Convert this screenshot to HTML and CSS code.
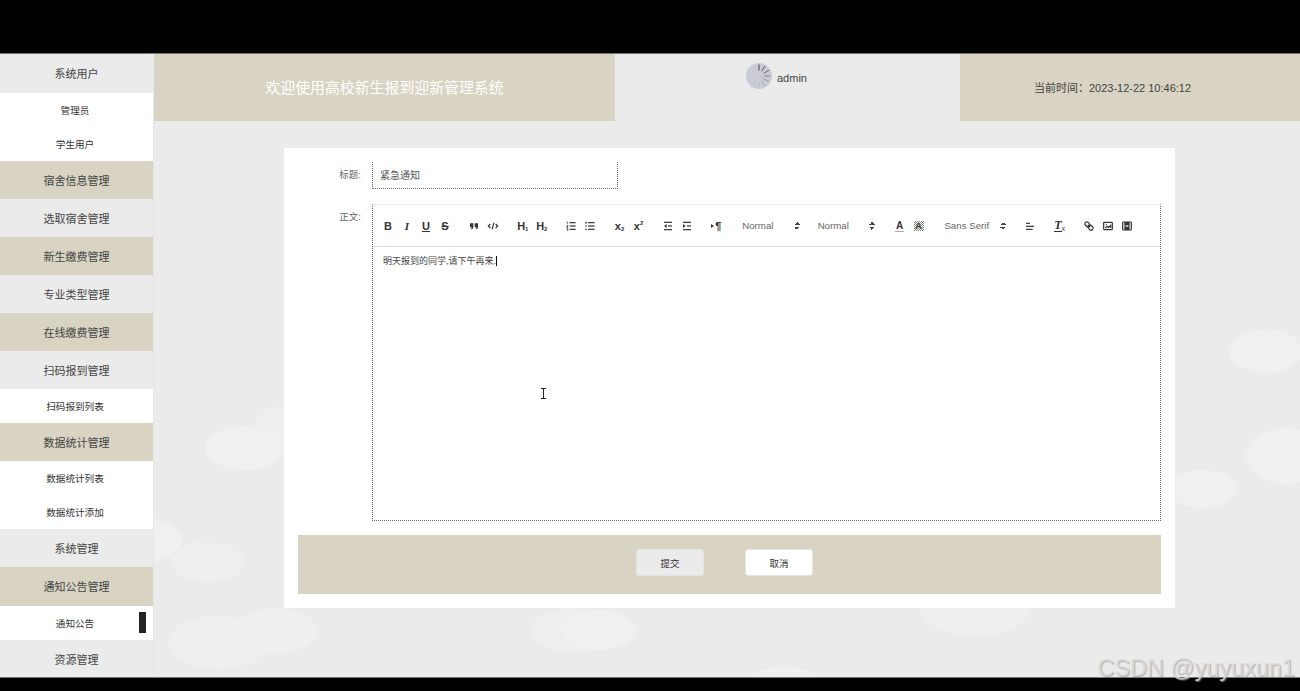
FILE: index.html
```html
<!DOCTYPE html>
<html lang="zh-CN">
<head>
  <meta charset="UTF-8">
  <title>高校新生报到迎新管理系统</title>
  <link rel="stylesheet" href="styles.css">
</head>
<body>
  <div class="bar-top"></div>
  <div class="app">
    <aside class="sidebar">
      <a class="nav grey first">系统用户</a>
      <a class="sub">管理员</a>
      <a class="sub">学生用户</a>
      <a class="nav tan">宿舍信息管理</a>
      <a class="nav grey">选取宿舍管理</a>
      <a class="nav tan">新生缴费管理</a>
      <a class="nav grey">专业类型管理</a>
      <a class="nav tan">在线缴费管理</a>
      <a class="nav grey">扫码报到管理</a>
      <a class="sub">扫码报到列表</a>
      <a class="nav tan">数据统计管理</a>
      <a class="sub">数据统计列表</a>
      <a class="sub">数据统计添加</a>
      <a class="nav grey">系统管理</a>
      <a class="nav tan tall">通知公告管理</a>
      <a class="sub current">通知公告</a>
      <a class="nav grey short">资源管理</a>
    </aside>

    <main class="main">
      <header class="header">
        <div class="header-title">欢迎使用高校新生报到迎新管理系统</div>
        <div class="header-user">
          <svg class="avatar" viewBox="0 0 26 26">
            <circle cx="13" cy="13" r="13" fill="#c9ccd4"/>
            <g stroke-width="1" stroke-linecap="round">
              <line x1="13" y1="2" x2="13" y2="7" stroke="#444"/>
              <line x1="18.5" y1="3.5" x2="16" y2="7.8" stroke="#555"/>
              <line x1="22.5" y1="7.5" x2="18.2" y2="10" stroke="#666"/>
              <line x1="24" y1="13" x2="19" y2="13" stroke="#808080"/>
              <line x1="22.5" y1="18.5" x2="18.2" y2="16" stroke="#969696"/>
              <line x1="18.5" y1="22.5" x2="16" y2="18.2" stroke="#aaa"/>
              <line x1="13" y1="24" x2="13" y2="19" stroke="#b6b8be"/>
              <line x1="7.5" y1="22.5" x2="10" y2="18.2" stroke="#bcbec4"/>
            </g>
          </svg>
          <span>admin</span>
        </div>
        <div class="header-time">当前时间：2023-12-22 10:46:12</div>
      </header>

      <div class="card">
        <div class="field">
          <label class="field-label">标题:</label>
          <div class="title-input">紧急通知</div>
        </div>
        <div class="field">
          <label class="field-label">正文:</label>
          <div class="editor">
            <div class="toolbar">
              <div class="group">
                <button class="tool letter"><b>B</b></button>
                <button class="tool letter serif"><b><i>I</i></b></button>
                <button class="tool letter"><b><u>U</u></b></button>
                <button class="tool letter"><b><s>S</s></b></button>
              </div>
              <div class="group">
                <button class="tool"><svg viewBox="0 0 18 18"><path class="fill" d="M3 5h5v5c0 2-1 3.500-3 4l-.5-1.300c.8-.3 1.300-.9 1.400-1.700H3zM10 5h5v5c0 2-1 3.500-3 4l-.5-1.300c.8-.3 1.300-.9 1.400-1.700H10z"/></svg></button>
                <button class="tool"><svg viewBox="0 0 18 18"><polyline class="line" points="5 6 2 9 5 12"/><polyline class="line" points="13 6 16 9 13 12"/><line class="line" x1="10.500" y1="4" x2="7.500" y2="14"/></svg></button>
              </div>
              <div class="group">
                <button class="tool letter"><span>H<sub>1</sub></span></button>
                <button class="tool letter"><span>H<sub>2</sub></span></button>
              </div>
              <div class="group">
                <button class="tool"><svg viewBox="0 0 18 18"><line class="line" x1="7" y1="4" x2="16" y2="4"/><line class="line" x1="7" y1="9" x2="16" y2="9"/><line class="line" x1="7" y1="14" x2="16" y2="14"/><path class="thin" d="M2.500 3h1.500v3M2.500 8h2v1.500h-2v1.500h2M2.500 12.500h2v3h-2M2.800 14h1.500"/></svg></button>
                <button class="tool"><svg viewBox="0 0 18 18"><line class="line" x1="6" y1="4" x2="16" y2="4"/><line class="line" x1="6" y1="9" x2="16" y2="9"/><line class="line" x1="6" y1="14" x2="16" y2="14"/><path class="round" d="M3 4h.01M3 9h.01M3 14h.01"/></svg></button>
              </div>
              <div class="group">
                <button class="tool letter"><span>x<sub>2</sub></span></button>
                <button class="tool letter"><span>x<sup>2</sup></span></button>
              </div>
              <div class="group">
                <button class="tool"><svg viewBox="0 0 18 18"><line class="line" x1="3" y1="3.500" x2="15" y2="3.500"/><line class="line" x1="3" y1="14.500" x2="15" y2="14.500"/><line class="line" x1="9" y1="9" x2="15" y2="9"/><polygon class="fill" points="7 6 7 12 3 9"/></svg></button>
                <button class="tool"><svg viewBox="0 0 18 18"><line class="line" x1="3" y1="3.500" x2="15" y2="3.500"/><line class="line" x1="3" y1="14.500" x2="15" y2="14.500"/><line class="line" x1="9" y1="9" x2="15" y2="9"/><polygon class="fill" points="3 6 3 12 7 9"/></svg></button>
              </div>
              <div class="group">
                <button class="tool para"><span class="arrow-right"></span>¶</button>
              </div>
              <div class="group">
                <div class="picker">Normal<span class="updown"></span></div>
              </div>
              <div class="group">
                <div class="picker long">Normal<span class="updown"></span></div>
              </div>
              <div class="group">
                <button class="tool letter color-a"><b>A</b></button>
                <button class="tool letter bg-a"><b>A</b></button>
              </div>
              <div class="group">
                <div class="picker wide">Sans Serif<span class="updown"></span></div>
              </div>
              <div class="group">
                <button class="tool"><svg viewBox="0 0 18 18"><line class="line" x1="3" y1="5" x2="9" y2="5"/><line class="line" x1="3" y1="9.500" x2="15" y2="9.500"/><line class="line" x1="3" y1="14" x2="13" y2="14"/></svg></button>
              </div>
              <div class="group">
                <button class="tool clear"><b><i>T</i></b><small>x</small></button>
              </div>
              <div class="group">
                <button class="tool"><svg viewBox="0 0 18 18"><rect class="line" x="2.500" y="3.500" width="8" height="6" rx="3" transform="rotate(45 6.500 6.500)"/><rect class="line" x="7.500" y="8.500" width="8" height="6" rx="3" transform="rotate(45 11.500 11.500)"/><line class="line" x1="7" y1="7" x2="11" y2="11"/></svg></button>
                <button class="tool"><svg viewBox="0 0 18 18"><rect class="line" x="2.500" y="3.500" width="13" height="11" rx="1"/><polyline class="line" points="5 12 8 9.500 10 11 13 8 13 12"/><circle class="fill" cx="6.500" cy="7" r="1"/></svg></button>
                <button class="tool"><svg viewBox="0 0 18 18"><rect class="line" x="2.500" y="3" width="13" height="12" rx="1"/><line class="line" x1="6" y1="3" x2="6" y2="15"/><line class="line" x1="12" y1="3" x2="12" y2="15"/><rect class="fill" x="6" y="3" width="6" height="5"/><rect class="fill" x="6" y="10" width="6" height="5"/></svg></button>
              </div>
            </div>
            <div class="editor-body"><span class="caret">明天报到的同学,请下午再来.</span></div>
          </div>
        </div>
        <div class="actions">
          <button class="btn btn-grey">提交</button>
          <button class="btn btn-white">取消</button>
        </div>
      </div>

      <svg class="ibeam" viewBox="0 0 7 11"><path d="M1 .5h5M3.500.5v10M1 10.500h5" fill="none" stroke="#222"/></svg>
    </main>
  </div>
  <div class="bar-bottom"></div>
  <div class="watermark">CSDN @yuyuxun1</div>
</body>
</html>
```

FILE: styles.css
```css
* {
  box-sizing: border-box;
}
html, body {
  height: 100%;
}
body {
  margin: 0;
  overflow: hidden;
  background-color: #000;
  color: #333;
  font-family: "Liberation Sans", "Noto Sans CJK SC", sans-serif;
  font-size: 10px;
}
.bar-top {
  height: 53px;
}
.bar-bottom {
  height: 13px;
}
.app {
  display: flex;
  height: 625px;
  border-top: 1px solid #777;
  border-bottom: 1px solid #777;
  overflow: hidden;
}

/* sidebar */
.sidebar {
  width: 153px;
  flex: none;
  display: flex;
  flex-direction: column;
  background-color: #fff;
  position: relative;
  z-index: 1;
}
.nav, .sub {
  display: flex;
  align-items: center;
  justify-content: center;
  flex: none;
}
.nav {
  height: 38px;
  font-size: 11px;
  color: #444;
}
.first, .tall {
  height: 39px;
  padding-bottom: 1px;
}
.short {
  height: 37px;
}
.sub {
  height: 34px;
  background-color: #fff;
  font-size: 9.600px;
  color: #333;
  padding-right: 3px;
}
.grey {
  background-color: #ebebeb;
}
.tan {
  background-color: #d8d3c2;
}
.current {
  position: relative;
}
.current::after {
  content: "";
  position: absolute;
  left: 139px;
  top: 6px;
  width: 7px;
  height: 21px;
  background-color: #222;
}

/* main area */
.main {
  flex: 1;
  position: relative;
  border-left: 1px solid #e6e6e6;
  background-color: #ebebeb;
  background-image:
    radial-gradient(40px 22px at 91px 394px, #f0f0f0 98%, transparent),
    radial-gradient(36px 26px at 136px 376px, #eeeeee 98%, transparent),
    radial-gradient(37px 22px at 1111px 297px, #f0f0f0 98%, transparent),
    radial-gradient(42px 28px at 1132px 402px, #f0f0f0 98%, transparent),
    radial-gradient(35px 19px at 1049px 435px, #f0f0f0 98%, transparent),
    radial-gradient(52px 25px at -24px 486px, #f0f0f0 98%, transparent),
    radial-gradient(37px 20px at 53px 508px, #eeeeee 98%, transparent),
    radial-gradient(43px 23px at 121px 577px, #efefef 98%, transparent),
    radial-gradient(50px 27px at 64px 589px, #eeeeee 98%, transparent),
    radial-gradient(38px 20px at 445px 576px, #f0f0f0 98%, transparent),
    radial-gradient(43px 21px at 418px 576px, #eeeeee 98%, transparent),
    radial-gradient(55px 27px at 821px 555px, #efefef 98%, transparent),
    radial-gradient(35px 14px at 630px 627px, #f0f0f0 98%, transparent);
}
.header {
  display: flex;
  height: 67px;
}
.header-title {
  width: 461px;
  padding-bottom: 2px;
  background-color: #d8d3c2;
  color: #fff;
  font-size: 14.900px;
  display: flex;
  align-items: center;
  justify-content: center;
}
.header-user {
  width: 345px;
  padding: 9px 0 0 131px;
  display: flex;
  align-items: flex-start;
  gap: 5px;
  font-size: 11px;
  color: #444;
  background-color: #ebebeb;
}
.header-user span {
  margin-top: 9px;
}
.avatar {
  width: 26px;
  height: 26px;
}
.header-time {
  flex: 1;
  background-color: #d8d3c2;
  color: #444;
  font-size: 11px;
  padding: 0 35px 2px 0;
  display: flex;
  align-items: center;
  justify-content: center;
}

/* form card */
.card {
  width: 891px;
  height: 460px;
  margin: 27px 0 0 130px;
  padding: 14px 14px 0;
  background-color: #fff;
}
.field {
  display: flex;
  gap: 11px;
  margin-bottom: 15px;
}
.field-label {
  width: 63px;
  flex: none;
  text-align: right;
  font-size: 9.500px;
  color: #666;
  padding-top: 5px;
}
.title-input {
  width: 246px;
  height: 27px;
  padding: 5px 7px 0;
  border: 1px dotted #666;
  border-top: none;
  font-size: 10px;
  color: #555;
}
.editor {
  width: 789px;
  height: 317px;
  border: 1px dotted #666;
  border-top: 1px solid #eee;
  display: flex;
  flex-direction: column;
}
.toolbar {
  height: 42px;
  padding: 0 0 0 5.500px;
  display: flex;
  align-items: center;
  gap: 10.400px;
  border-bottom: 1px solid #ddd;
}
.group {
  display: flex;
}
.tool {
  width: 19px;
  height: 16px;
  padding: 0;
  border: none;
  background: none;
  color: #333;
  display: flex;
  align-items: center;
  justify-content: center;
  font-family: inherit;
}
.tool svg {
  width: 12px;
  height: 12px;
}
.line {
  fill: none;
  stroke: #333;
  stroke-width: 1.800;
}
.thin {
  fill: none;
  stroke: #333;
  stroke-width: 1;
}
.round {
  fill: none;
  stroke: #333;
  stroke-width: 2.500;
  stroke-linecap: round;
}
.fill {
  fill: #333;
}
.letter {
  font-size: 11px;
  font-weight: bold;
}
.letter sub, .letter sup {
  font-size: 6px;
  line-height: 0;
}
.letter sub {
  vertical-align: -1px;
}
.serif {
  font-family: "Liberation Serif", serif;
}
.para {
  font-size: 11px;
  font-weight: bold;
  gap: 1px;
}
.arrow-right {
  width: 0;
  height: 0;
  border-left: 3px solid #333;
  border-top: 2px solid transparent;
  border-bottom: 2px solid transparent;
}
.picker {
  width: 65px;
  padding: 0 1.500px 0 6px;
  display: flex;
  align-items: center;
  justify-content: space-between;
  font-size: 9.700px;
  color: #666;
}
.long {
  width: 68px;
  padding-right: 4.500px;
}
.wide {
  width: 72px;
  padding-right: 4px;
}
.updown {
  width: 6px;
  height: 8px;
  background-image:
    linear-gradient(135deg, transparent 50%, #444 50%),
    linear-gradient(225deg, transparent 50%, #444 50%),
    linear-gradient(45deg, transparent 50%, #444 50%),
    linear-gradient(315deg, transparent 50%, #444 50%);
  background-size: 3px 3px;
  background-repeat: no-repeat;
  background-position: 0 0, 3px 0, 0 5px, 3px 5px;
}
.color-a {
  font-size: 10px;
}
.color-a b {
  border-bottom: 1px solid #aaa;
  line-height: 11px;
  padding: 0 1px;
}
.bg-a {
  font-size: 9px;
}
.bg-a b {
  width: 10px;
  height: 10px;
  line-height: 10px;
  text-align: center;
  background-image: repeating-conic-gradient(#888 0 25%, #fff 0 50%);
  background-size: 2px 2px;
}
.clear {
  font-family: "Liberation Serif", serif;
  font-size: 12px;
}
.clear b {
  border-bottom: 1px solid #333;
  line-height: 11px;
}
.clear small {
  font-size: 7px;
  font-family: "Liberation Sans", sans-serif;
  margin-top: 6px;
}
.editor-body {
  flex: 1;
  padding: 8px 10px;
  font-size: 9px;
  line-height: 13px;
  color: #444;
}
.caret {
  border-right: 1px solid #111;
}
.actions {
  height: 59px;
  margin-top: -1px;
  padding: 14px 0 0 338px;
  display: flex;
  align-items: flex-start;
  gap: 41px;
  background-color: #d8d3c2;
}
.btn {
  width: 68px;
  height: 27px;
  border: 1px solid #e4e4e4;
  border-radius: 3px;
  font-family: inherit;
  font-size: 9.500px;
  color: #333;
}
.btn-grey {
  background-color: #ebebeb;
}
.btn-white {
  background-color: #fff;
}

/* overlays */
.ibeam {
  position: absolute;
  left: 386px;
  top: 334px;
  width: 7px;
  height: 11px;
}
.watermark {
  position: absolute;
  right: 5px;
  top: 655px;
  font-size: 23.500px;
  color: rgba(218, 218, 218, 0.9);
  text-shadow: 1px 1px 1px rgba(150, 150, 150, 0.7);
}
```
